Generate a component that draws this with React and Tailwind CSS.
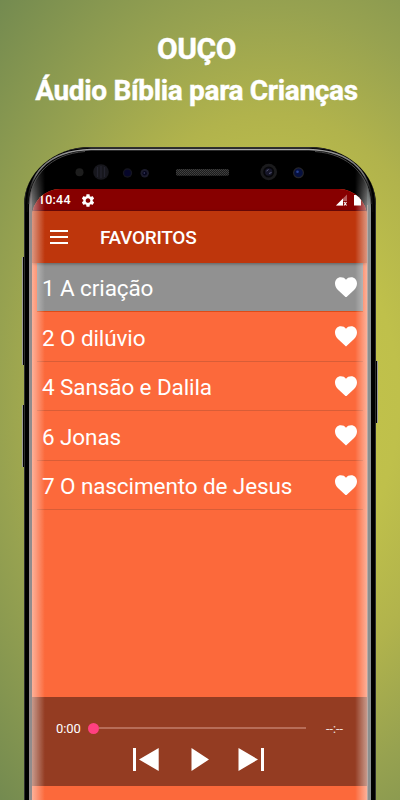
import React from 'react';

const tracks = [
  '1 A criação',
  '2 O dilúvio',
  '4 Sansão e Dalila',
  '6 Jonas',
  '7 O nascimento de Jesus',
];

function Heart() {
  return (
    <svg className="h-[20.500px] w-[22px] shrink-0" viewBox="0 0 22 20.500" fill="#fff">
      <path d="M11 20.500L3.200 13.200C1.100 11.200 0 9.100 0 6.500C0 2.800 2.500.2 5.800.2C8 .2 9.900 1 11 2.700C12.100 1 14 .2 16.200.2C19.500.2 22 2.800 22 6.500C22 9.100 20.900 11.200 18.800 13.200z" />
    </svg>
  );
}

function Bezel() {
  return (
    <svg className="block h-[42px] w-[335px] shrink-0" viewBox="32 147 335 42">
      <defs>
        <pattern id="mesh" width="2" height="2" patternUnits="userSpaceOnUse">
          <rect width="2" height="2" fill="#1c1c1c" />
          <rect width="1" height="1" fill="#414141" />
          <rect x="1" y="1" width="1" height="1" fill="#3b3b3b" />
        </pattern>
      </defs>
      <circle cx="79.5" cy="172.3" r="4" fill="#1d1d1d" />
      <circle cx="101" cy="172" r="7.8" fill="#17171d" />
      <path d="M97.500 167v10M101 166v12M104.500 167v10" stroke="#23232e" strokeWidth="1.300" />
      <circle cx="127.500" cy="173" r="4.700" fill="#14141f" />
      <circle cx="127.500" cy="173" r="3.300" fill="#06062a" />
      <circle cx="144.700" cy="173.300" r="4.200" fill="#1b1b2c" />
      <circle cx="144.700" cy="173.300" r="2.200" fill="#05051c" />
      <circle cx="144.300" cy="173" r=".8" fill="#44446a" />
      <rect x="176" y="169" width="53" height="6.800" rx="1.800" fill="url(#mesh)" />
      <circle cx="268.700" cy="172" r="8.300" fill="#1b1b1d" />
      <circle cx="268.700" cy="172" r="5.500" fill="#060609" />
      <circle cx="268.700" cy="172" r="3.700" fill="#161629" />
      <path d="M266.500 171l2-1.500M269 173.500l2.500-1" stroke="#5d5d7c" strokeWidth="1" />
      <circle cx="298.500" cy="172.800" r="5.500" fill="#25252a" />
      <circle cx="298.500" cy="172.800" r="4.300" fill="#06103f" />
      <circle cx="297.500" cy="171.800" r="1.300" fill="#294396" />
    </svg>
  );
}

function StatusBar() {
  return (
    <div className="flex h-[22px] shrink-0 items-center border-b border-[#6d0707] bg-[#870000] pt-px pr-[6px] pl-[6px] text-[12.500px] font-medium text-white">
      <span className="w-[43px] pt-px leading-none tracking-[0.2px]">10:44</span>
      <svg className="h-[13px] w-[14px]" viewBox="2 2 20 20" fill="#fff">
        <path d="M19.140 12.940c.04-.3.060-.61.060-.94 0-.32-.02-.64-.07-.94l2.030-1.580c.18-.14.230-.41.120-.61l-1.920-3.320c-.12-.22-.37-.29-.59-.22l-2.390.96c-.5-.38-1.030-.7-1.620-.94l-.36-2.540c-.04-.24-.24-.41-.48-.41h-3.840c-.24 0-.43.170-.47.410l-.36 2.540c-.59.240-1.130.570-1.620.940l-2.390-.96c-.22-.08-.47 0-.59.220L2.740 8.870c-.12.210-.08.470.120.610l2.030 1.580c-.05.300-.09.630-.09.940s.02.640.07.940l-2.030 1.580c-.18.140-.23.410-.12.610l1.920 3.320c.12.220.37.290.59.220l2.390-.96c.5.380 1.030.7 1.620.94l.36 2.540c.05.240.24.410.48.410h3.840c.24 0 .44-.17.470-.41l.36-2.540c.59-.24 1.130-.56 1.620-.94l2.390.96c.22.080.47 0 .59-.22l1.920-3.320c.12-.22.070-.47-.12-.61l-2.010-1.580zM12 15.600c-1.980 0-3.600-1.620-3.600-3.600s1.620-3.600 3.600-3.600 3.600 1.620 3.600 3.600-1.620 3.600-3.600 3.600z" />
      </svg>
      <svg className="ml-auto h-[12px] w-[26px]" viewBox="0 0 26 12">
        <path d="M1 11.500L12 .5v11z" fill="#b65c5c" />
        <path d="M1 11.500L8 4.500v7z" fill="#fff" />
        <path d="M8 7h5v5H8z" fill="#870000" />
        <path d="M9 8l2.500 3.500M11.500 8L9 11.500" stroke="#fff" strokeWidth="1.100" />
        <path d="M19 1h6.500l.5 1v9.500h-7z" fill="#fff" />
      </svg>
    </div>
  );
}

function Player() {
  return (
    <div className="h-[89px] shrink-0 bg-[#943c22] pt-[24px]">
      <div className="flex h-[14px] items-center pl-[24px] text-[13px] text-white">
        <span className="w-[32px] pt-px leading-none tracking-[-0.1px]">0:00</span>
        <div className="h-[11px] w-[11px] rounded-full bg-[#ff4081]" />
        <div className="h-[2px] w-[207px] bg-[#b76d58]" />
        <span className="ml-[20px] pt-[2px] text-[12.500px] leading-none text-white/85">--:--</span>
      </div>
      <div className="flex pt-[13px] pl-[101px]">
        <svg className="h-[23px] w-[131px]" viewBox="0 0 131 23" fill="#fff">
          <path d="M0 0h3v23H0zM25.700 0v23L6 11.500zM58.500 0v23L76 11.500zM105.500 0v23L125 11.500zM128 0h3.500v23H128z" />
        </svg>
      </div>
    </div>
  );
}

function Screen() {
  return (
    <div className="flex h-[611px] flex-col overflow-hidden rounded-t-[28px] bg-[#fc693b]">
      <StatusBar />
      <div className="relative flex h-[52px] shrink-0 items-center bg-[#be360c] pl-[18px] shadow-[0_1px_3px_rgba(0,0,0,0.35)]">
        <div className="flex w-[50px] flex-col gap-[4px]">
          <div className="h-[2px] w-[18px] bg-white" />
          <div className="h-[2px] w-[18px] bg-white" />
          <div className="h-[2px] w-[18px] bg-white" />
        </div>
        <span className="pt-[2px] text-[19px] font-medium tracking-[-0.270px] text-white">FAVORITOS</span>
      </div>
      <div className="flex flex-1 flex-col pr-[4px] pl-[5px]">
        {tracks.map((name, i) => (
          <div
            key={name}
            className={`flex h-[49.400px] items-center justify-between border-b pr-[6px] pl-[5px] text-[22.500px] text-white ${
              i === 0 ? 'border-[#df4b16] bg-[#919191]' : 'border-[#d85d37]'
            }`}
          >
            <span className="pt-[3px] leading-none tracking-[-0.1px]">{name}</span>
            <Heart />
          </div>
        ))}
      </div>
      <Player />
      <div className="h-[14px] shrink-0" />
    </div>
  );
}

export default function App() {
  return (
    <div className="h-[800px] w-[400px] overflow-hidden bg-[radial-gradient(390px_560px_at_270px_400px,#c5c54a_0%,#bfc04b_33%,#b1b34c_51%,#97a250_70%,#738a50_100%)] font-['Roboto',sans-serif]">
      <div className="flex h-[147px] flex-col items-center pt-[32px] pr-[7px] font-bold text-white">
        <h1 className="text-[30px] leading-[34px] tracking-[-0.500px] [-webkit-text-stroke:0.4px_white]">OUÇO</h1>
        <h2 className="mt-[8px] text-[28px] leading-[34px] tracking-[-0.340px] whitespace-nowrap [-webkit-text-stroke:0.4px_white]">Áudio Bíblia para Crianças</h2>
      </div>
      <div className="relative ml-[24px] h-[653px] w-[352px]">
        <div className="absolute top-[110px] left-[-2px] h-[108px] w-[3px] border-l border-[#999] bg-black" />
        <div className="absolute top-[258px] left-[-2px] h-[62px] w-[3px] border-l border-[#999] bg-black" />
        <div className="absolute top-[214px] right-[-2px] h-[62px] w-[3px] border-r border-[#999] bg-black" />
        <div className="relative h-[653px] overflow-hidden rounded-t-[66px_58px] bg-black px-[8px] pr-[9px]">
          <Bezel />
          <Screen />
          <svg className="pointer-events-none absolute top-0 left-0 h-[653px] w-[352px]" viewBox="24 147 352 653" fill="none">
            <defs>
              <linearGradient id="left" x1="32" x2="45" y1="0" y2="0" gradientUnits="userSpaceOnUse">
                <stop stopColor="#fff" stopOpacity=".48" />
                <stop offset=".3" stopColor="#fff" stopOpacity=".34" />
                <stop offset="1" stopColor="#fff" stopOpacity="0" />
              </linearGradient>
              <linearGradient id="right" x1="355" x2="367" y1="0" y2="0" gradientUnits="userSpaceOnUse">
                <stop stopColor="#fff" stopOpacity="0" />
                <stop offset=".7" stopColor="#fff" stopOpacity=".34" />
                <stop offset="1" stopColor="#fff" stopOpacity=".48" />
              </linearGradient>
              <linearGradient id="fade" x1="0" x2="0" y1="155" y2="205" gradientUnits="userSpaceOnUse">
                <stop stopColor="#fff" stopOpacity=".1" />
                <stop offset="1" stopColor="#fff" />
              </linearGradient>
              <linearGradient id="rim" x1="26" x2="374" y1="0" y2="0" gradientUnits="userSpaceOnUse">
                <stop stopColor="#444" stopOpacity="0" />
                <stop offset=".03" stopColor="#777" />
                <stop offset=".2" stopColor="#aaa" />
                <stop offset=".8" stopColor="#aaa" />
                <stop offset=".97" stopColor="#777" />
                <stop offset="1" stopColor="#444" stopOpacity="0" />
              </linearGradient>
              <mask id="body" maskUnits="userSpaceOnUse" x="24" y="147" width="352" height="653">
                <path d="M29 800V208C29 172 50 154 91 153H309C350 154 371 172 371 208V800z" fill="url(#fade)" />
              </mask>
            </defs>
            <g mask="url(#body)">
              <path d="M32 150h13v650H32z" fill="url(#left)" />
              <path d="M355 150h12v650h-12z" fill="url(#right)" />
              <path d="M29 165h3v635h-3z" fill="#918c8c" />
              <path d="M367 165h4v635h-4z" fill="#8a9090" />
              <path d="M367 205h1v595h-1z" fill="#b9aaa5" />
            </g>
            <path d="M24.500 800V206C24.500 170 47 148 91 147.500H309C353 148 375.500 170 375.500 206V800" stroke="#303030" />
            <path d="M27 212C27 174 47 150.500 91 149.500H309C353 150.500 373 174 373 212" stroke="url(#rim)" strokeWidth="1.500" />
            <path d="M29 204C31 176 50 154 85 151.500M315 151.500C350 154 369 176 371 204" stroke="#585858" strokeWidth=".8" />
          </svg>
        </div>
      </div>
    </div>
  );
}
